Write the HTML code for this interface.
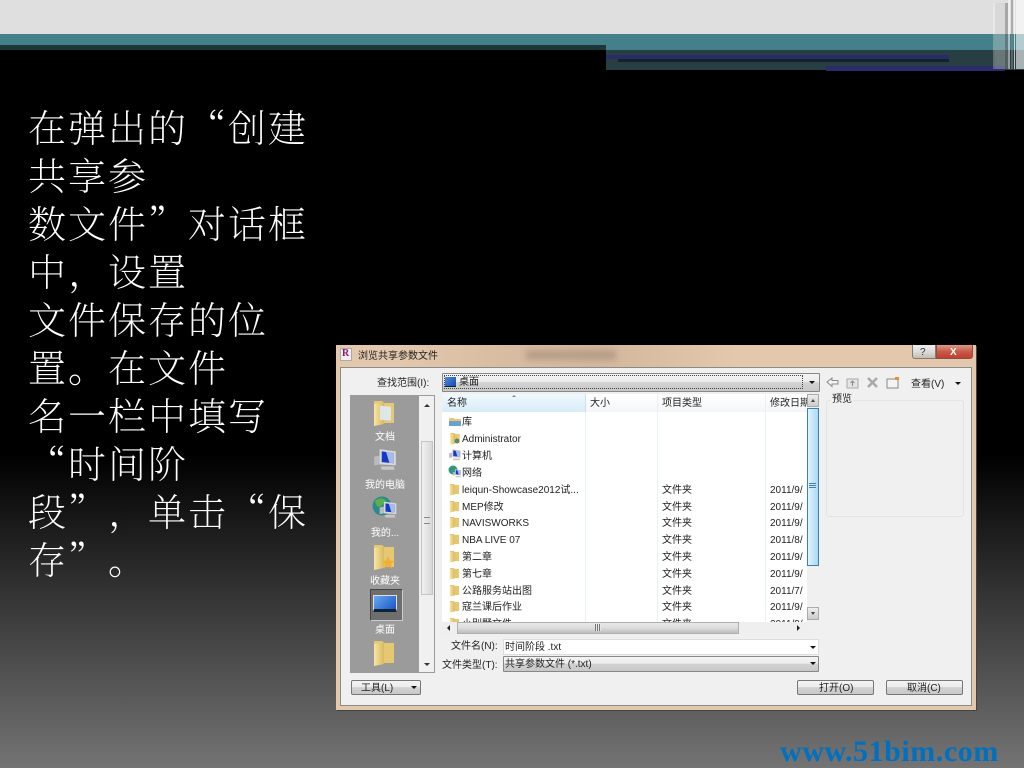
<!DOCTYPE html>
<html lang="zh-CN">
<head>
<meta charset="utf-8">
<title>创建共享参数文件</title>
<style>
html,body{margin:0;padding:0;width:1024px;height:768px;overflow:hidden;background:#000}
body{position:relative;font-family:"Liberation Sans","Noto Sans CJK SC",sans-serif}
.a{position:absolute}
#bg{left:0;top:0;width:1024px;height:768px;background:linear-gradient(180deg,#000 0,#000 455px,#747474 768px)}
#main{left:28px;top:102px;width:300px;font:200 38px/48px "Noto Serif CJK SC",serif;letter-spacing:2px;color:#fff;white-space:nowrap;text-spacing-trim:space-all}
#main div{height:48px}
#dlg{left:336px;top:345px;width:640px;height:365px;background:#e3c8ae;filter:blur(.35px);box-shadow:1px 1px 0 #444;overflow:hidden;color:#222;font-size:10px;line-height:14px}
#dlg .t{position:absolute;white-space:pre;margin-top:1px}
#dlg .t2{margin-top:2px}
#dlg .t0{margin-top:0}
.btn{position:absolute;box-sizing:border-box;border:1px solid #777;border-radius:2px;background:linear-gradient(180deg,#f4f4f4 0,#ececec 45%,#d2d2d2 50%,#c8c8c8 100%)}
.arrow{position:absolute;width:0;height:0;border-left:3.5px solid transparent;border-right:3.5px solid transparent;border-top:3.5px solid #111}
.sep{position:absolute;width:1px;background:#e8f1f8}
.side{position:absolute;color:#fff;width:68px;text-align:center;left:15px;font-size:10px;line-height:14px;margin-top:2px}
</style>
</head>
<body>
<svg width="0" height="0" style="position:absolute">
<defs>
<linearGradient id="fg" x1="0" y1="0" x2="1" y2="0"><stop offset="0" stop-color="#f8e6a4"/><stop offset="1" stop-color="#d9b860"/></linearGradient>
<symbol id="folder" viewBox="0 0 12 14"><path d="M1 1h4l1 1h5v10H5l-4 1.500z" fill="#e6c873"/><path d="M1 2.500l5 -1v11l-5 1z" fill="url(#fg)"/></symbol>
<symbol id="pc" viewBox="0 0 24 24"><path d="M2 9l5-1v8l-5 1z" fill="#bbb"/><path d="M7 2l15 2v13L7 16z" fill="#d8d8d8"/><path d="M9 4l11 1.500v9.500L9 14z" fill="#1638c8"/><path d="M13 4.500l7 1v9.500l-4-.5z" fill="#a9bbe8"/><path d="M8 18h12l1 3H9z" fill="#c8c8c8"/></symbol>
</defs>
</svg>

<div id="bg" class="a"></div>

<!-- top bands -->
<div class="a" style="left:0;top:0;width:1024px;height:34px;background:#dfdfdf"></div>
<div class="a" style="left:0;top:34px;width:1024px;height:16px;background:#44808a"></div>
<div class="a" style="left:0;top:45px;width:606px;height:5px;background:#1c3639"></div>
<div class="a" style="left:606px;top:50px;width:418px;height:19.5px;background:#273f42"></div>
<div class="a" style="left:606px;top:55px;width:343px;height:4px;background:#2a2a6c"></div>
<div class="a" style="left:618px;top:59px;width:331px;height:3px;background:#142426"></div>
<div class="a" style="left:826px;top:65.5px;width:179px;height:5px;background:#2a2a6c"></div>
<!-- right stripes -->
<div class="a" style="left:993px;top:3px;width:2px;height:66px;background:rgba(255,255,255,.25)"></div>
<div class="a" style="left:995px;top:3px;width:10px;height:66px;background:rgba(205,205,205,.4)"></div>
<div class="a" style="left:1005px;top:3px;width:3px;height:66px;background:rgba(120,120,120,.55)"></div>
<div class="a" style="left:1008px;top:0;width:2px;height:69px;background:rgba(255,255,255,.5)"></div>
<div class="a" style="left:1011px;top:0;width:2px;height:69px;background:rgba(130,130,130,.55)"></div>
<div class="a" style="left:1014px;top:0;width:1px;height:69px;background:rgba(255,255,255,.7)"></div>
<div class="a" style="left:1016px;top:0;width:8px;height:69px;background:rgba(255,255,255,.6)"></div>

<!-- main text -->
<div id="main" class="a"><div>在弹出的“创建</div><div>共享参</div><div>数文件”对话框</div><div>中，设置</div><div>文件保存的位</div><div>置。在文件</div><div>名一栏中填写</div><div>“时间阶</div><div>段”，单击“保</div><div>存”。</div></div>

<!-- dialog -->
<div id="dlg" class="a">
  <div class="a" style="left:60px;top:0;width:340px;height:22px;background:linear-gradient(90deg,#e3c8ae,#d9bda2 30%,#d3b79c 60%,#e3c8ae)"></div>
  <div class="a" style="left:190px;top:5px;width:90px;height:10px;background:#b89f88;filter:blur(3px)"></div>
  <div class="a" style="left:4px;top:3px;width:12px;height:13px;background:#f2eef2;border:1px solid #aaa;box-sizing:border-box"></div>
  <div class="t t0" style="left:6px;top:2px;font:bold 10px/13px 'Liberation Serif',serif;color:#8a1a70">R</div>
  <div class="t t2" style="left:22px;top:3px;color:#222">浏览共享参数文件</div>
  <!-- caption buttons -->
  <div class="a" style="left:576px;top:0;width:24px;height:14px;box-sizing:border-box;border:1px solid #8a7a6e;border-top:0;border-radius:0 0 0 3px;background:linear-gradient(180deg,#eee,#ddd 50%,#c4bcb4)"></div>
  <div class="t t0" style="left:584px;top:1px;font-size:10px;color:#333">?</div>
  <div class="a" style="left:600px;top:0;width:37px;height:14px;box-sizing:border-box;border:1px solid #8a5048;border-top:0;border-radius:0 0 3px 0;background:linear-gradient(180deg,#dc9a8a,#c85a48 50%,#c04030)"></div>
  <div class="t t0" style="left:614px;top:1px;font:bold 10px/13px 'Liberation Sans',sans-serif;color:#fff">X</div>

  <!-- client area -->
  <div class="a" style="left:4px;top:22px;width:632px;height:339px;box-sizing:border-box;background:#f0f0f0;border:1px solid #8b8b8b"></div>

  <div class="t t2" style="left:41px;top:30px">查找范围(I):</div>
  <!-- look-in combo -->
  <div class="btn" style="left:106px;top:28px;width:378px;height:19px;border-color:#888;border-radius:1px"></div>
  <div class="a" style="left:108px;top:30px;width:359px;height:14px;border:1px dotted #444;box-sizing:border-box"></div>
  <div class="a" style="left:109px;top:32px;width:11px;height:9px;background:linear-gradient(135deg,#4f8ce0,#1848b0);border-bottom:1px solid #123"></div>
  <div class="t" style="left:123px;top:30px">桌面</div>
  <div class="arrow" style="left:473px;top:36px"></div>

  <!-- toolbar -->
  <svg class="a" style="left:490px;top:31px" width="132" height="16" viewBox="0 0 132 16">
    <path d="M1 6l5-4v2.500h6v3.500H6v2.500z" fill="#f4f4f4" stroke="#8a8a8a"/>
    <rect x="21" y="3" width="11" height="9" fill="#e4e4e4" stroke="#aaa"/><path d="M26.500 10V6M24.500 7l2-2 2 2" fill="none" stroke="#888"/>
    <path d="M42 2l9 9M51 2l-9 9" stroke="#a8a8a8" stroke-width="2.500" fill="none"/>
    <rect x="61" y="3" width="11" height="9" fill="#f4f4f4" stroke="#888"/><rect x="69" y="1" width="4" height="3" fill="#e89030"/>
  </svg>
  <div class="t t2" style="left:575px;top:31px">查看(V)</div>
  <div class="arrow" style="left:619px;top:37px"></div>

  <!-- places bar -->
  <div class="a" style="left:14px;top:50px;width:85px;height:278px;box-sizing:border-box;border:1px solid #9a9a9a;background:#f0f0f0"></div>
  <div class="a" style="left:15px;top:51px;width:68px;height:276px;background:#9b9b9b"></div>
  <div class="a" style="left:85px;top:96px;width:12px;height:154px;box-sizing:border-box;border:1px solid #c4c4c4;background:linear-gradient(90deg,#f0f0f0,#d8d8d8)"></div>
  <div class="a" style="left:88px;top:59px;width:0;height:0;border-left:3px solid transparent;border-right:3px solid transparent;border-bottom:3px solid #333"></div>
  <div class="a" style="left:88px;top:318px;width:0;height:0;border-left:3px solid transparent;border-right:3px solid transparent;border-top:3px solid #333"></div>
  <div class="a" style="left:88px;top:172px;width:6px;height:5px;border-top:1px solid #888;border-bottom:1px solid #888"></div>

  <svg class="a" style="left:36px;top:54px" width="24" height="28"><use href="#folder" width="24" height="28"/><rect x="8" y="6" width="11" height="14" fill="#dfe6ea" transform="skewY(5)"/></svg>
  <div class="side" style="top:84px">文档</div>
  <svg class="a" style="left:36px;top:102px" width="26" height="26"><use href="#pc" width="26" height="26"/></svg>
  <div class="side" style="top:132px">我的电脑</div>
  <svg class="a" style="left:36px;top:150px" width="26" height="26"><circle cx="10" cy="11" r="9.500" fill="#2e8a8a"/><path d="M3 6c4-4 9-3 11 0-3 1-3 5-7 6-2-1-4-3-4-6z" fill="#5cb04a"/><use href="#pc" x="6" y="4" width="20" height="22"/></svg>
  <div class="side" style="top:180px">我的...</div>
  <svg class="a" style="left:36px;top:198px" width="24" height="28"><use href="#folder" width="24" height="28"/><path d="M16 13l2 4.500 4.500.5-3.500 3 1 4.500-4-2.500-4 2.500 1-4.500-3-3 4.500-.5z" fill="#f0b030"/></svg>
  <div class="side" style="top:228px">收藏夹</div>
  <div class="a" style="left:34px;top:244px;width:33px;height:32px;box-sizing:border-box;background:#6e6e6e;border:1px solid #444;border-right-color:#ccc;border-bottom-color:#ccc"></div>
  <div class="a" style="left:37px;top:250px;width:24px;height:17px;box-sizing:border-box;background:linear-gradient(135deg,#6aa8f0,#1a58c8);border:1px solid #ddd;border-bottom:3px solid #123"></div>
  <div class="side" style="top:277px">桌面</div>
  <svg class="a" style="left:36px;top:294px" width="24" height="28"><use href="#folder" width="24" height="28"/></svg>

  <!-- list -->
  <div class="a" style="left:106px;top:49px;width:365px;height:228px;background:#fff;overflow:hidden">
    <div class="a" style="left:0;top:0;width:365px;height:18px;background:linear-gradient(180deg,#fff,#f4f6f8)"></div>
    <div class="a" style="left:0;top:0;width:143px;height:18px;background:linear-gradient(180deg,#f0f8fd,#d8ecf8);border-right:1px solid #c8e0f0"></div>
    <div class="sep" style="left:143px;top:18px;height:210px"></div>
    <div class="sep" style="left:215px;top:0;height:228px"></div>
    <div class="sep" style="left:323px;top:0;height:228px"></div>
    <div class="t" style="left:5px;top:2px">名称</div>
    <div class="a" style="left:70px;top:1px;width:0;height:0;border-left:2.500px solid transparent;border-right:2.500px solid transparent;border-bottom:2.500px solid #789"></div>
    <div class="t" style="left:148px;top:2px">大小</div>
    <div class="t" style="left:220px;top:2px">项目类型</div>
    <div class="t" style="left:328px;top:2px">修改日期</div>

    <svg class="a" style="left:6px;top:22px" width="14" height="11"><path d="M1 2h5l1 1h6v7H1z" fill="#e8c870"/><path d="M1 5h12v5H1z" fill="#6aa0d8"/></svg>
    <div class="t" style="left:20px;top:21px">库</div>
    <svg class="a" style="left:7px;top:38px" width="12" height="13"><use href="#folder" width="12" height="13"/><circle cx="8" cy="9" r="2.500" fill="#5a8a6a"/></svg>
    <div class="t" style="left:20px;top:38px">Administrator</div>
    <svg class="a" style="left:6px;top:54px" width="14" height="14"><use href="#pc" width="14" height="14"/></svg>
    <div class="t" style="left:20px;top:55px">计算机</div>
    <svg class="a" style="left:6px;top:71px" width="14" height="14"><circle cx="5" cy="5" r="4.500" fill="#2e9a7a"/><use href="#pc" x="4" y="3" width="10" height="11"/></svg>
    <div class="t" style="left:20px;top:72px">网络</div>

    <svg class="a" style="left:7px;top:89px" width="11" height="13"><use href="#folder" width="11" height="13"/></svg>
    <div class="t" style="left:20px;top:89px">leiqun-Showcase2012试...</div>
    <div class="t" style="left:220px;top:89px">文件夹</div><div class="t" style="left:328px;top:89px">2011/9/</div>
    <svg class="a" style="left:7px;top:106px" width="11" height="13"><use href="#folder" width="11" height="13"/></svg>
    <div class="t" style="left:20px;top:106px">MEP修改</div>
    <div class="t" style="left:220px;top:106px">文件夹</div><div class="t" style="left:328px;top:106px">2011/9/</div>
    <svg class="a" style="left:7px;top:122px" width="11" height="13"><use href="#folder" width="11" height="13"/></svg>
    <div class="t" style="left:20px;top:122px">NAVISWORKS</div>
    <div class="t" style="left:220px;top:122px">文件夹</div><div class="t" style="left:328px;top:122px">2011/9/</div>
    <svg class="a" style="left:7px;top:139px" width="11" height="13"><use href="#folder" width="11" height="13"/></svg>
    <div class="t" style="left:20px;top:139px">NBA LIVE 07</div>
    <div class="t" style="left:220px;top:139px">文件夹</div><div class="t" style="left:328px;top:139px">2011/8/</div>
    <svg class="a" style="left:7px;top:156px" width="11" height="13"><use href="#folder" width="11" height="13"/></svg>
    <div class="t" style="left:20px;top:156px">第二章</div>
    <div class="t" style="left:220px;top:156px">文件夹</div><div class="t" style="left:328px;top:156px">2011/9/</div>
    <svg class="a" style="left:7px;top:173px" width="11" height="13"><use href="#folder" width="11" height="13"/></svg>
    <div class="t" style="left:20px;top:173px">第七章</div>
    <div class="t" style="left:220px;top:173px">文件夹</div><div class="t" style="left:328px;top:173px">2011/9/</div>
    <svg class="a" style="left:7px;top:190px" width="11" height="13"><use href="#folder" width="11" height="13"/></svg>
    <div class="t" style="left:20px;top:190px">公路服务站出图</div>
    <div class="t" style="left:220px;top:190px">文件夹</div><div class="t" style="left:328px;top:190px">2011/7/</div>
    <svg class="a" style="left:7px;top:206px" width="11" height="13"><use href="#folder" width="11" height="13"/></svg>
    <div class="t" style="left:20px;top:206px">寇兰课后作业</div>
    <div class="t" style="left:220px;top:206px">文件夹</div><div class="t" style="left:328px;top:206px">2011/9/</div>
    <svg class="a" style="left:7px;top:223px" width="11" height="13"><use href="#folder" width="11" height="13"/></svg>
    <div class="t" style="left:20px;top:223px">小别墅文件</div>
    <div class="t" style="left:220px;top:223px">文件夹</div><div class="t" style="left:328px;top:223px">2011/9/</div>
  </div>

  <!-- v scrollbar -->
  <div class="a" style="left:471px;top:49px;width:12px;height:226px;background:#f0f0f0"></div>
  <div class="a" style="left:471px;top:49px;width:12px;height:13px;box-sizing:border-box;border:1px solid #aaa;background:linear-gradient(180deg,#eee,#ccc)"></div>
  <div class="a" style="left:475px;top:54px;width:0;height:0;border-left:2.500px solid transparent;border-right:2.500px solid transparent;border-bottom:3px solid #444"></div>
  <div class="a" style="left:471px;top:63px;width:12px;height:158px;box-sizing:border-box;border:1px solid #3c7fb1;background:linear-gradient(90deg,#e2f3fd,#a9d9f5)"></div>
  <div class="a" style="left:473px;top:138px;width:7px;height:6px;background:repeating-linear-gradient(180deg,#3c7fb1 0,#3c7fb1 1px,#cdeafb 1px,#cdeafb 2px)"></div>
  <div class="a" style="left:471px;top:262px;width:12px;height:13px;box-sizing:border-box;border:1px solid #aaa;background:linear-gradient(180deg,#eee,#ccc)"></div>
  <div class="a" style="left:475px;top:267px;width:0;height:0;border-left:2.500px solid transparent;border-right:2.500px solid transparent;border-top:3px solid #444"></div>

  <!-- h scrollbar -->
  <div class="a" style="left:106px;top:277px;width:365px;height:13px;background:#efefef"></div>
  <div class="a" style="left:121px;top:277px;width:282px;height:12px;box-sizing:border-box;border:1px solid #b0b0b0;background:linear-gradient(180deg,#e8e8e8,#dcdcdc 50%,#bdbdbd)"></div>
  <div class="a" style="left:111px;top:280px;width:0;height:0;border-top:3px solid transparent;border-bottom:3px solid transparent;border-right:3px solid #222"></div>
  <div class="a" style="left:461px;top:280px;width:0;height:0;border-top:3px solid transparent;border-bottom:3px solid transparent;border-left:3px solid #222"></div>
  <div class="a" style="left:259px;top:279px;width:6px;height:7px;background:repeating-linear-gradient(90deg,#777 0,#777 1px,#e8e8e8 1px,#e8e8e8 2px)"></div>

  <!-- preview -->
  <div class="a" style="left:490px;top:55px;width:138px;height:117px;box-sizing:border-box;border:1px solid #e3e3e3;border-radius:3px"></div>
  <div class="t" style="left:495px;top:47px;background:#f0f0f0;padding:0 1px">预览</div>

  <!-- file name -->
  <div class="t" style="left:115px;top:294px">文件名(N):</div>
  <div class="a" style="left:167px;top:294px;width:316px;height:16px;box-sizing:border-box;background:#fff;border:1px solid #ddd"></div>
  <div class="t" style="left:169px;top:295px">时间阶段 .txt</div>
  <div class="arrow" style="left:474px;top:301px"></div>
  <div class="t t2" style="left:106px;top:312px">文件类型(T):</div>
  <div class="btn" style="left:167px;top:311px;width:316px;height:16px;border-color:#888;border-radius:1px"></div>
  <div class="t" style="left:169px;top:312px">共享参数文件 (*.txt)</div>
  <div class="arrow" style="left:474px;top:317px"></div>

  <!-- buttons -->
  <div class="btn" style="left:15px;top:335px;width:70px;height:15px"></div>
  <div class="t t2" style="left:25px;top:335px">工具(L)</div>
  <div class="arrow" style="left:75px;top:341px"></div>
  <div class="btn" style="left:461px;top:335px;width:77px;height:15px"></div>
  <div class="t t2" style="left:483px;top:335px">打开(O)</div>
  <div class="btn" style="left:550px;top:335px;width:77px;height:15px"></div>
  <div class="t t2" style="left:571px;top:335px">取消(C)</div>
</div>

<div class="a" style="left:780px;top:736px;font:bold 30px/32px 'Liberation Serif',serif;letter-spacing:.55px;color:#0070c0;white-space:pre">www.51bim.com</div>
</body>
</html>
